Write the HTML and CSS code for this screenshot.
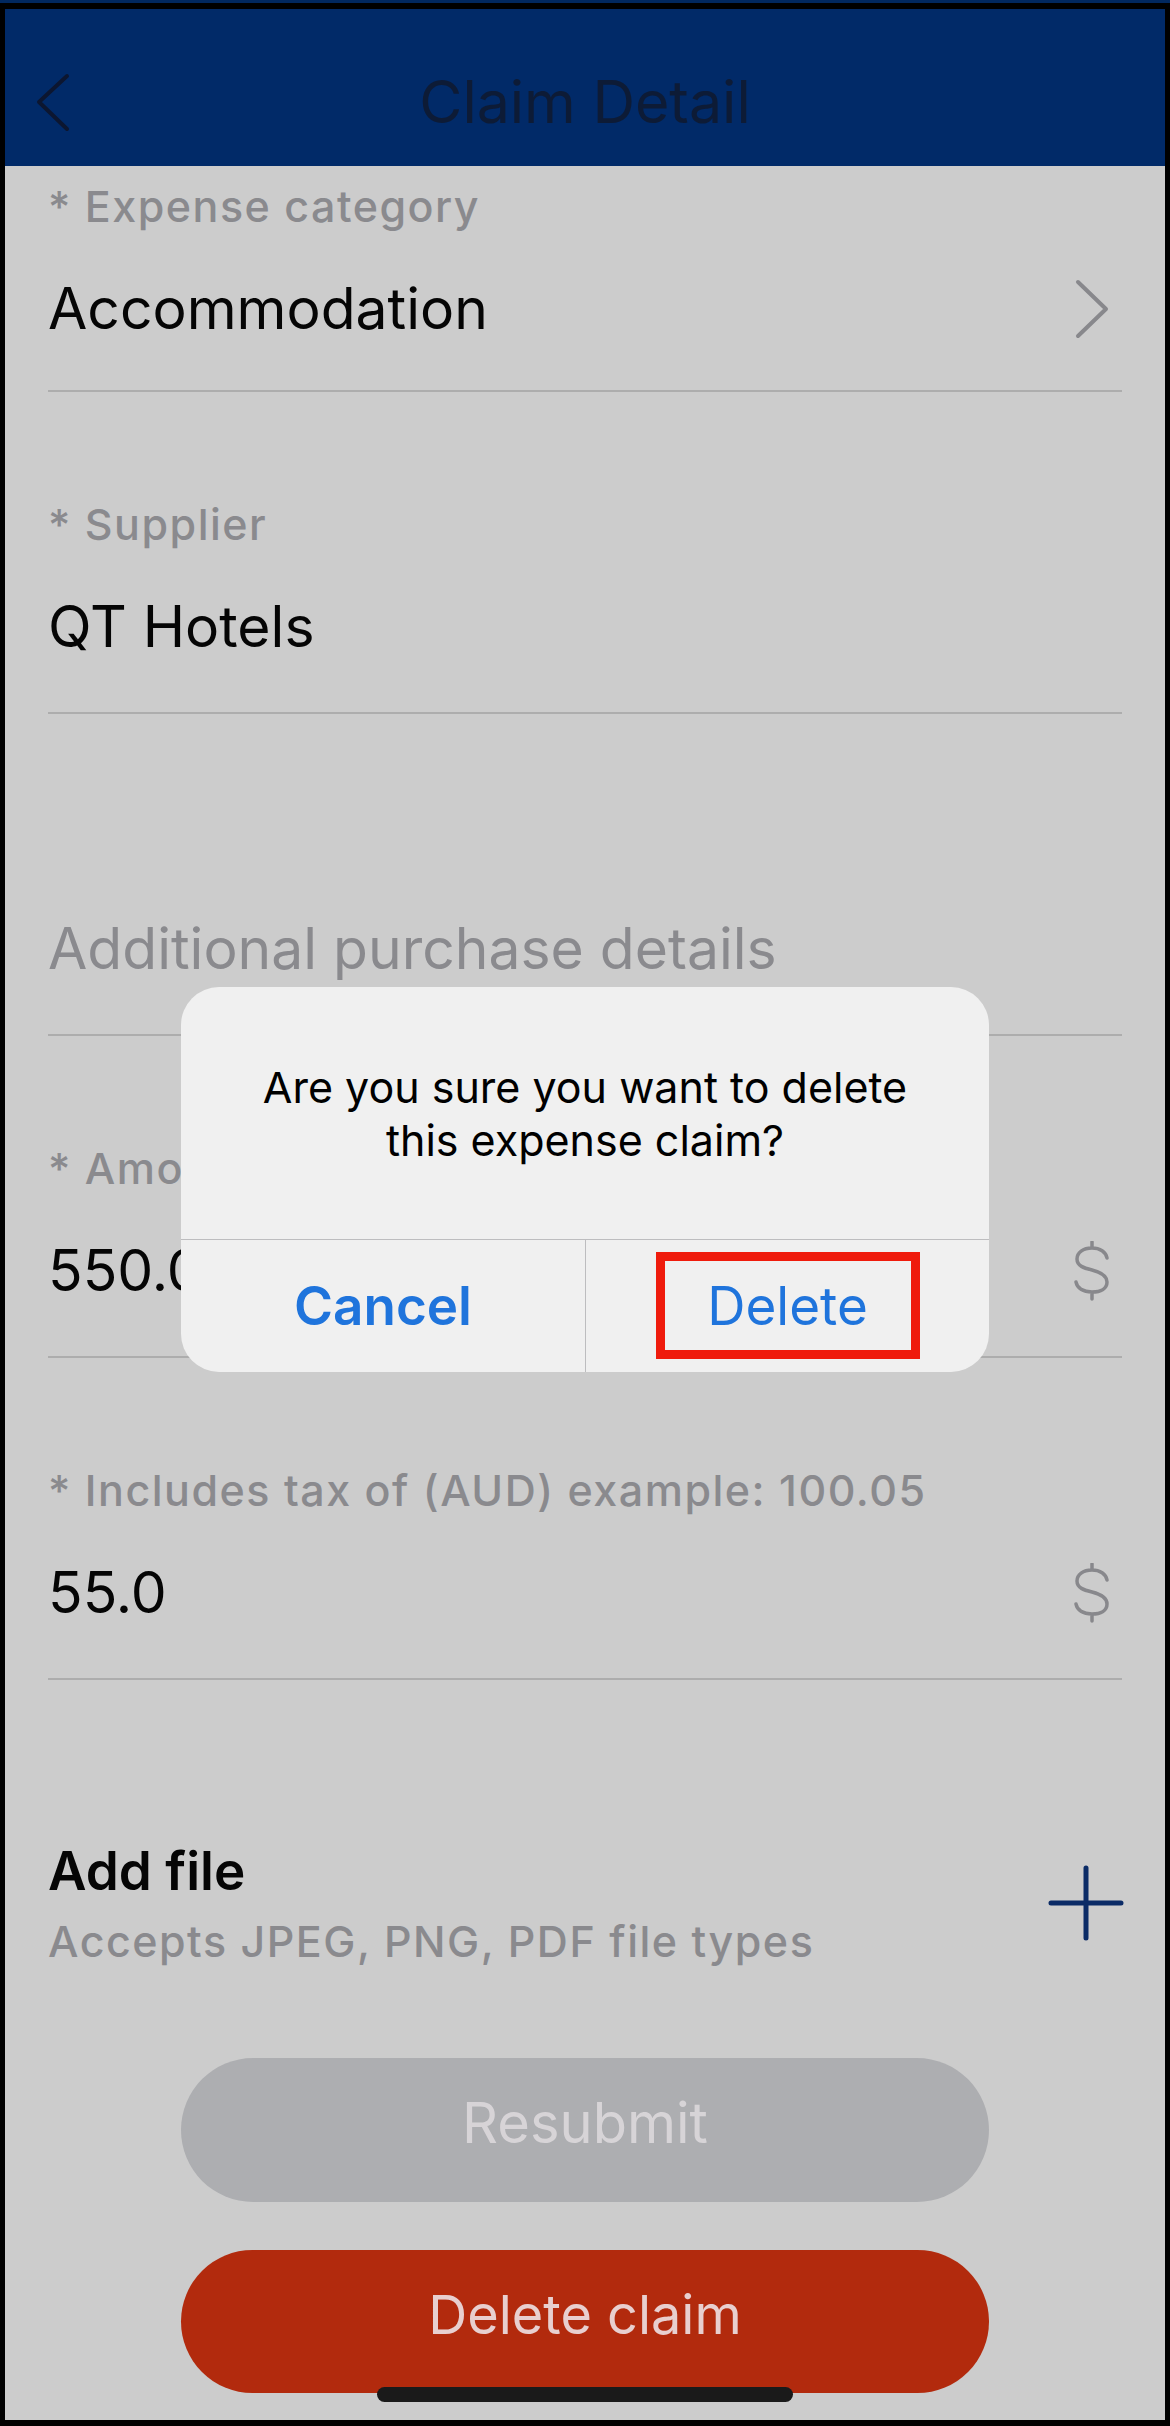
FILE: index.html
```html
<!DOCTYPE html>
<html lang="en">
<head>
    <meta charset="UTF-8">
    <meta name="viewport" content="width=device-width, initial-scale=1.0">
    <title>Claim Detail</title>
    <link rel="stylesheet" href="styles.css">
</head>
<body>
    <div class="screen">
        <div class="header">
            <svg class="back-icon" width="40" height="60" viewBox="0 0 40 60">
                <polyline points="32,4 4,30 32,57" fill="none" stroke="#0c1630" stroke-width="4" stroke-linecap="round" stroke-linejoin="round"/>
            </svg>
            <div class="header-title">Claim Detail</div>
            <div></div>
        </div>

        <div class="form">
            <div class="field">
                <div class="field-label">* Expense category</div>
                <div class="field-row">
                    <span class="field-value">Accommodation</span>
                    <svg class="row-icon" width="36" height="62" viewBox="0 0 36 62">
                        <polyline points="4,4 32,31 4,58" fill="none" stroke="#88888c" stroke-width="4" stroke-linecap="round" stroke-linejoin="round"/>
                    </svg>
                </div>
            </div>
            <div class="field">
                <div class="field-label">* Supplier</div>
                <div class="field-row">
                    <span class="field-value">QT Hotels</span>
                </div>
            </div>
            <div class="field">
                <div class="field-label">&nbsp;</div>
                <div class="field-row">
                    <span class="field-value placeholder">Additional purchase details</span>
                </div>
            </div>
            <div class="field">
                <div class="field-label">* Amount</div>
                <div class="field-row">
                    <span class="field-value">550.0</span>
                    <svg class="row-icon" width="36" height="60" viewBox="0 0 36 60">
                        <path d="M33 17 C32 11 26 7 18 7 C9 7 3 11.5 3 18 C3 25 10 27 18 29 C26 31 33 34 33 41 C33 47.5 27 51 18 51 C9 51 3 47 2 41 M18 1 V7 M18 51 V58" fill="none" stroke="#88888c" stroke-width="3.5" stroke-linecap="round"/>
                    </svg>
                </div>
            </div>
            <div class="field">
                <div class="field-label">* Includes tax of (AUD) example: 100.05</div>
                <div class="field-row">
                    <span class="field-value">55.0</span>
                    <svg class="row-icon" width="36" height="60" viewBox="0 0 36 60">
                        <path d="M33 17 C32 11 26 7 18 7 C9 7 3 11.5 3 18 C3 25 10 27 18 29 C26 31 33 34 33 41 C33 47.5 27 51 18 51 C9 51 3 47 2 41 M18 1 V7 M18 51 V58" fill="none" stroke="#88888c" stroke-width="3.5" stroke-linecap="round"/>
                    </svg>
                </div>
            </div>
        </div>

        <div class="attach">
            <div>
                <div class="attach-title">Add file</div>
                <div class="attach-hint">Accepts JPEG, PNG, PDF file types</div>
            </div>
            <svg class="plus-icon" width="76" height="76" viewBox="0 0 76 76">
                <path d="M3 38 H73 M38 3 V73" fill="none" stroke="#0b2b66" stroke-width="5" stroke-linecap="round"/>
            </svg>
        </div>

        <div class="actions">
            <div class="btn btn-disabled">Resubmit</div>
            <div class="btn btn-danger">Delete claim</div>
        </div>

        <div class="alert">
            <div class="alert-message">Are you sure you want to delete this expense claim?</div>
            <div class="alert-buttons">
                <div class="alert-btn alert-cancel">Cancel</div>
                <div class="alert-btn alert-delete">
                    Delete
                    <div class="highlight"></div>
                </div>
            </div>
        </div>

        <div class="home-indicator"></div>
    </div>
</body>
</html>
```

FILE: styles.css
```css
body {
    margin: 0;
    background-color: #000;
    border-top: 3px solid #01285f;
    font-family: Inter, "Liberation Sans", sans-serif;
}

.screen {
    position: relative;
    margin: 6px 5px;
    height: 2411px;
    overflow: hidden;
    background-color: #cccccc;
}

.header {
    display: grid;
    grid-template-columns: 120px 1fr 120px;
    align-items: center;
    height: 157px;
    padding-top: 28px;
    box-sizing: border-box;
    background-color: #012a68;
}

.back-icon {
    margin-left: 30px;
}

.header-title {
    text-align: center;
    font-size: 59px;
    color: #0d1b36;
}

.form {
    padding: 0 43px;
}

.field {
    padding: 107px 0 52px;
    border-bottom: 2px solid #adadad;
}

.field:first-child {
    padding-top: 15px;
    padding-bottom: 48px;
}

.field-label {
    font-size: 43px;
    line-height: 50px;
    font-weight: 500;
    letter-spacing: 1.5px;
    color: #8a8a8e;
    margin-bottom: 45px;
}

.field-row {
    display: flex;
    justify-content: space-between;
    align-items: center;
    height: 66px;
}

.field-value {
    font-size: 57px;
    line-height: 66px;
    color: #050505;
}

.field-value.placeholder {
    color: #8a8a8e;
}

.row-icon {
    margin-right: 12px;
}

.attach {
    display: flex;
    justify-content: space-between;
    align-items: center;
    padding: 160px 41px 0 43px;
}

.attach-title {
    font-size: 53px;
    line-height: 62px;
    font-weight: 600;
    color: #050505;
}

.attach-hint {
    margin-top: 14px;
    font-size: 43px;
    line-height: 50px;
    font-weight: 500;
    letter-spacing: 1.5px;
    color: #8a8a8e;
}

.actions {
    display: flex;
    flex-direction: column;
    align-items: center;
    gap: 48px;
    margin-top: 92px;
}

.btn {
    display: flex;
    justify-content: center;
    align-items: center;
    width: 808px;
    height: 144px;
    padding-bottom: 14px;
    box-sizing: border-box;
    border-radius: 72px;
}

.btn-disabled {
    background-color: #adaeb1;
    color: #d7d4d7;
    font-size: 56px;
}

.btn-danger {
    height: 143px;
    background-color: #b22a0d;
    color: #e8cfcf;
    font-size: 54px;
}

/* alert dialog */
.alert {
    position: absolute;
    top: 978px;
    left: 176px;
    width: 808px;
    background-color: #f0f0f0;
    border-radius: 38px;
    overflow: hidden;
}

.alert-message {
    padding: 74px 70px 72px;
    text-align: center;
    font-size: 43px;
    line-height: 53px;
    color: #000;
}

.alert-buttons {
    display: grid;
    grid-template-columns: 405px 1fr;
    height: 132px;
    border-top: 1px solid #bdbdbf;
}

.alert-btn {
    position: relative;
    display: flex;
    justify-content: center;
    align-items: center;
    font-size: 53px;
    color: #1f74dc;
}

.alert-cancel {
    font-weight: 600;
    border-right: 1px solid #bdbdbf;
}

.highlight {
    position: absolute;
    top: 12px;
    bottom: 13px;
    left: 70px;
    right: 69px;
    border: 9px solid #ef1b0c;
}

.home-indicator {
    position: absolute;
    bottom: 18px;
    left: 372px;
    width: 416px;
    height: 15px;
    border-radius: 8px;
    background-color: #1a1a1a;
}
```
